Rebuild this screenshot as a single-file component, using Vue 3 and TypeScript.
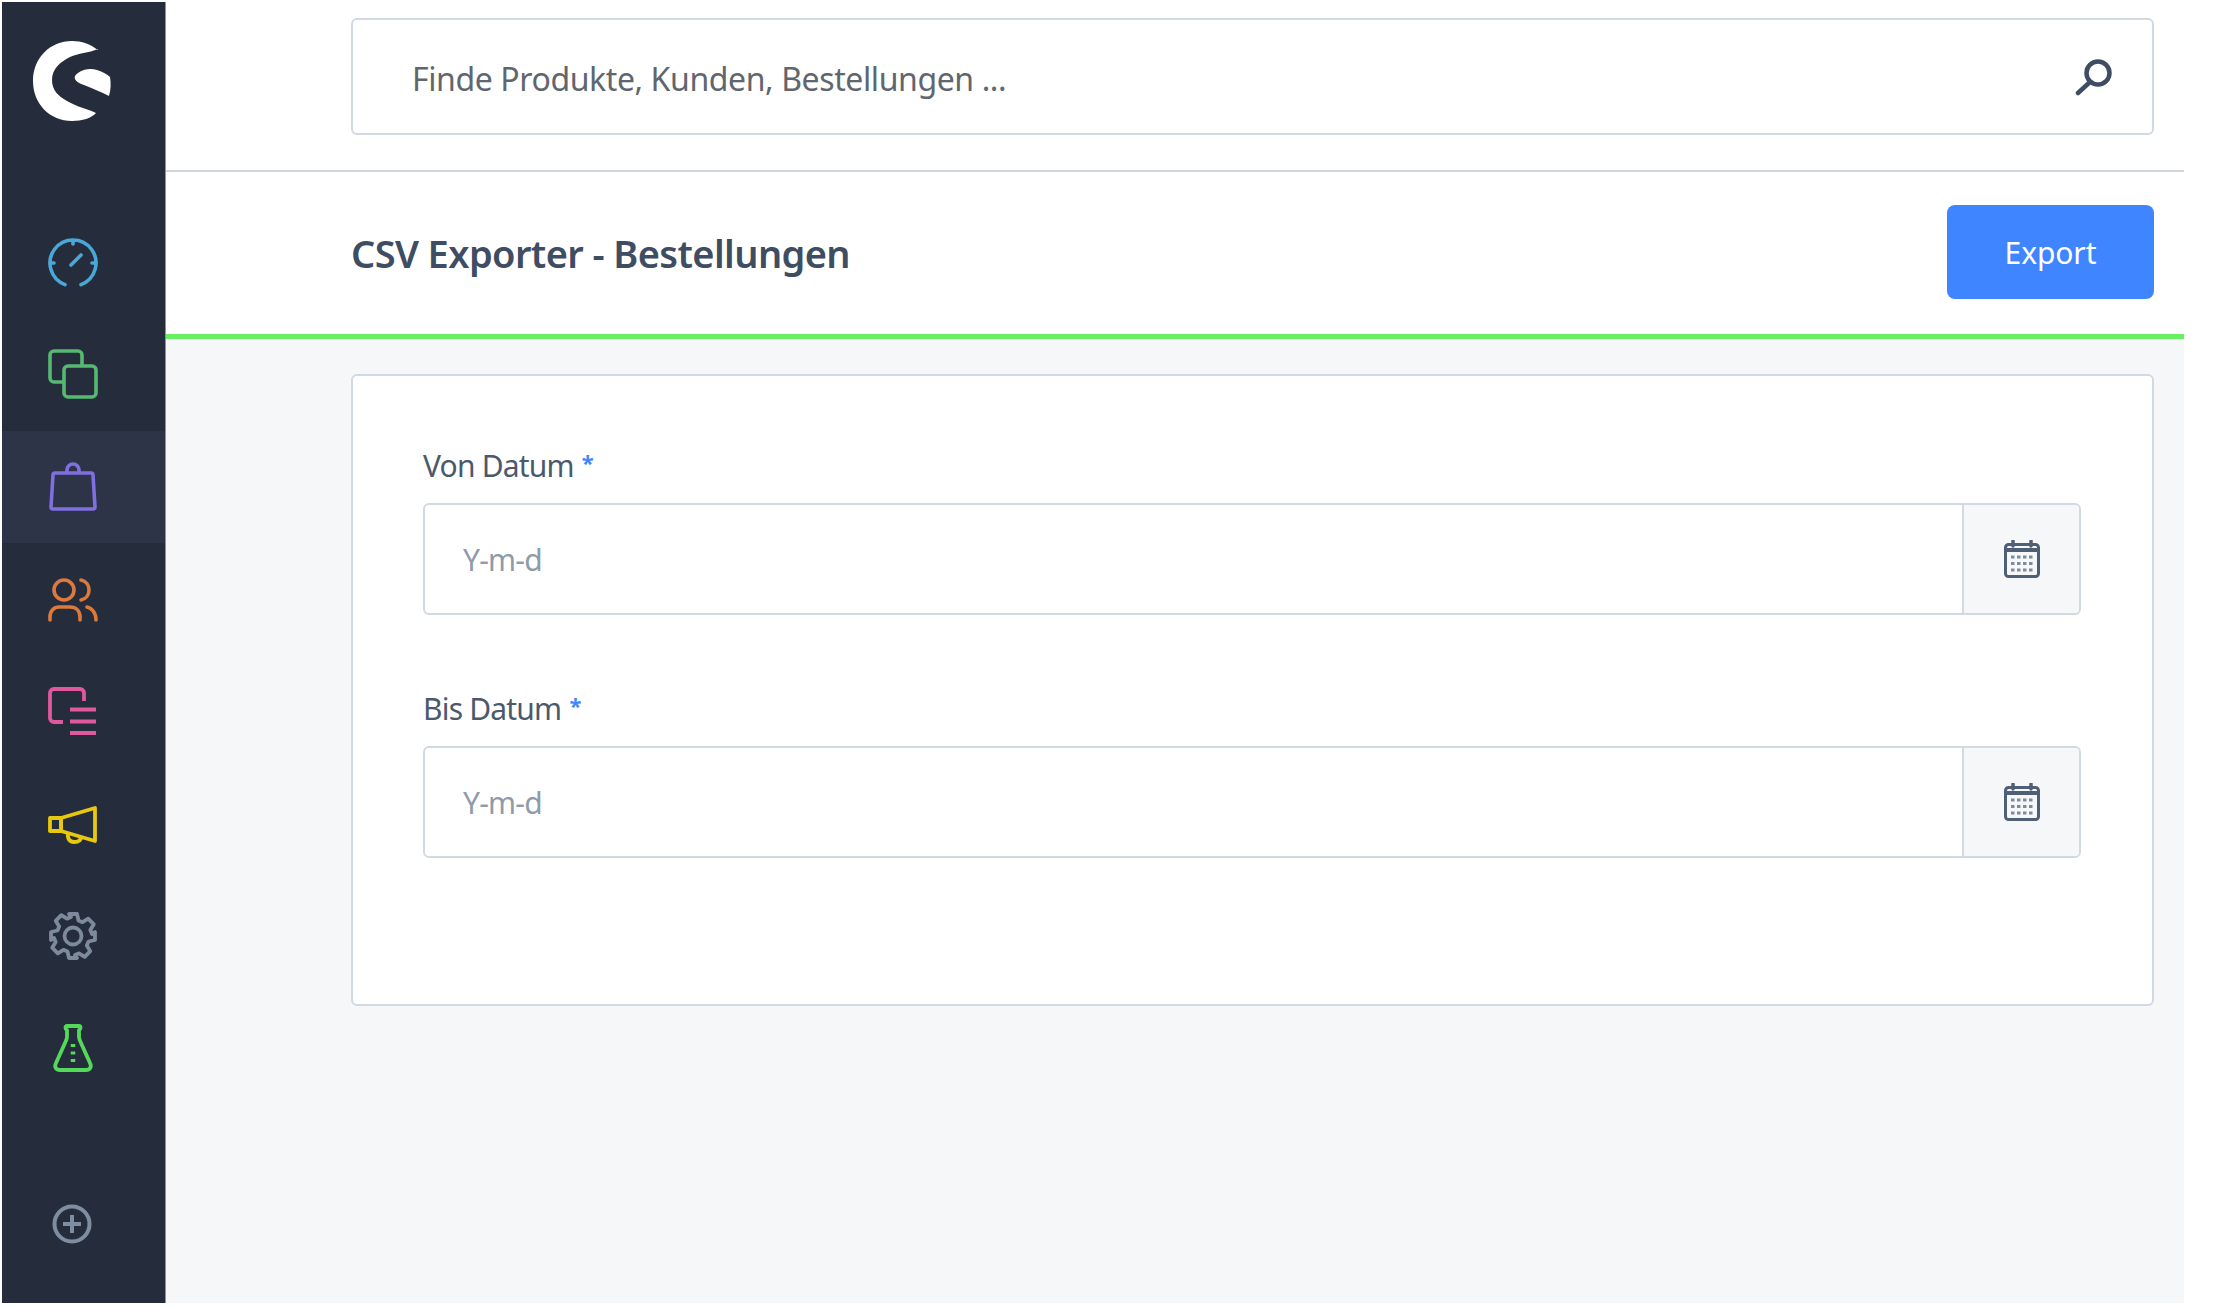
<script setup lang="ts">
const fields = [
  { id: 'from', label: 'Von Datum' },
  { id: 'to', label: 'Bis Datum' },
]
</script>

<template>
  <div class="page">
    <aside class="nav">
      <div class="nav-logo">
        <svg width="82" height="82" viewBox="0 0 82 82">
          <path fill="#fff" d="M66 10C58 4 50 1 40 1 18 1 1 18 1 41s17 40 39 40c10 0 20-3 24-8-8-4-19-6-29-12-9-5-15-11-15-21 0-11 8-18 18-23 8-4 19-4 28-8z" />
          <path fill="#fff" d="M46 33c5-4 13-5 19-3 6 2 10 4 13 7 1 6 1 12-1 19-8-4-17-8-25-11-6-2-8-4-9-6-1-2 0-4 3-6z" />
        </svg>
      </div>
      <div class="nav-items">
        <div class="nav-item">
          <svg width="50" height="50" viewBox="0 0 50 50" fill="none" stroke="#4aa8d8" stroke-width="3.6" stroke-linecap="round">
            <path d="M17 47.600A23 23 0 1 1 33 47.600" />
            <path d="M25 4v3M3 26h3M44 26h3M23 28l10-10" />
          </svg>
        </div>
        <div class="nav-item">
          <svg width="50" height="50" viewBox="0 0 50 50" fill="none" stroke="#57b872" stroke-width="3.6" stroke-linejoin="round">
            <path d="M16 33H6a4 4 0 0 1-4-4V6a4 4 0 0 1 4-4h24a4 4 0 0 1 4 4v11" />
            <rect x="16" y="17" width="32" height="31" rx="4" />
          </svg>
        </div>
        <div class="nav-item nav-item--active">
          <svg width="50" height="50" viewBox="0 0 50 50" fill="none" stroke="#7f6fe0" stroke-width="3.6" stroke-linejoin="round">
            <path d="M7 11h36a2 2 0 0 1 2 2l2 32a2 2 0 0 1-2 2H5a2 2 0 0 1-2-2l2-32a2 2 0 0 1 2-2z" />
            <path d="M19 11V8a6 6 0 0 1 12 0v3" />
          </svg>
        </div>
        <div class="nav-item">
          <svg width="50" height="50" viewBox="0 0 50 50" fill="none" stroke="#dc7a3e" stroke-width="3.6" stroke-linecap="round">
            <circle cx="16" cy="16" r="10" />
            <path d="M2 46v-3c0-6 4-10 9-10h11c6 0 10 4 10 10v3" />
            <path d="M33 6c5 1 8 5 8 10s-3 9-8 10M39 33c5 1 9 6 9 13" />
          </svg>
        </div>
        <div class="nav-item">
          <svg width="50" height="50" viewBox="0 0 50 50" fill="none" stroke="#e0599f" stroke-width="3.800" stroke-linejoin="round">
            <path d="M15 36H6a4 4 0 0 1-4-4V7a4 4 0 0 1 4-4h26a4 4 0 0 1 4 4v8" />
            <path d="M22 23.500h26M22 35.500h26M22 47h26" />
          </svg>
        </div>
        <div class="nav-item">
          <svg width="50" height="50" viewBox="0 0 50 50" fill="none" stroke="#e8c80e" stroke-width="3.800" stroke-linejoin="round">
            <path d="M13 19H2v13h11z" />
            <path d="M13 19L47 9v33L13 32z" />
            <path d="M20 34c-1 6 2 9 6 9 4 0 7-1 7-5" />
          </svg>
        </div>
        <div class="nav-item">
          <svg width="50" height="50" viewBox="0 0 50 50" fill="none" stroke="#7d8a9c" stroke-width="3.800" stroke-linejoin="round">
            <circle cx="25" cy="25" r="8.500" />
            <path d="M21 3h8l1.500 6.500 4 1.700 5.700-3.500 5.600 5.600-3.500 5.700 1.700 4L47 21v8l-6.500 1.500-1.700 4 3.500 5.700-5.600 5.600-5.700-3.500-4 1.700L29 47h-8l-1.500-6.500-4-1.700-5.700 3.500-5.600-5.600 3.500-5.700-1.700-4L3 29v-8l6.500-1.500 1.700-4-3.500-5.700 5.600-5.600 5.700 3.500 4-1.700z" />
          </svg>
        </div>
        <div class="nav-item">
          <svg width="50" height="50" viewBox="0 0 50 50" fill="none" stroke="#55d95a" stroke-width="3.800" stroke-linejoin="round" stroke-linecap="round">
            <path d="M19 3h12c2 0 2 3 0 4v7c0 2 1 4 2 6l9 20c2 4 0 7-4 7H12c-4 0-6-3-4-7l9-20c1-2 2-4 2-6V7c-2-1-2-4 0-4z" />
            <path d="M25 21v3M25 28.500v3M25 36v3" stroke-linecap="butt" stroke-width="4.500" />
          </svg>
        </div>
      </div>
      <div class="nav-add">
        <svg width="40" height="40" viewBox="0 0 40 40" fill="none" stroke="#7f8da0" stroke-width="4">
          <circle cx="20" cy="20" r="17.500" />
          <path d="M20 11v18M11 20h18" />
        </svg>
      </div>
    </aside>

    <main class="main">
      <div class="search-bar">
        <div class="search-box">
          <span class="search-text">Finde Produkte, Kunden, Bestellungen ...</span>
          <svg width="38" height="38" viewBox="0 0 38 38" fill="none" stroke="#3f4d62" stroke-width="4.500">
            <circle cx="23" cy="15" r="11.500" />
            <path d="M15 24L3 35" stroke-linecap="round" />
          </svg>
        </div>
      </div>

      <div class="smart-bar">
        <h1 class="title">CSV Exporter - Bestellungen</h1>
        <button class="export-btn" type="button">Export</button>
      </div>

      <div class="content">
        <section class="card">
          <div v-for="f in fields" :key="f.id" class="field">
            <label class="field-label">{{ f.label }}<span class="req">*</span></label>
            <div class="date-input">
              <div class="date-value">Y-m-d</div>
              <div class="date-addon">
                <svg width="36" height="38" viewBox="0 0 36 38" fill="none">
                  <rect x="1.500" y="4.500" width="33" height="32" rx="3" stroke="#4f5f75" stroke-width="3" />
                  <path d="M1.500 10h33" stroke="#4f5f75" stroke-width="4" />
                  <path d="M9 1v5M27 1v5" stroke="#4f5f75" stroke-width="3.500" stroke-linecap="round" />
                  <path d="M7 17h22M7 23.500h22M7 30h22" stroke="#7e8b9c" stroke-width="3.200" stroke-dasharray="3.500 2.500" />
                </svg>
              </div>
            </div>
          </div>
        </section>
      </div>
    </main>
  </div>
</template>

<style scoped>
.page {
  display: flex;
  width: 2182px;
  height: 1301px;
  margin: 2px 0 0 2px;
  font-family: "Noto Sans", "Open Sans", sans-serif;
  color: #3f4d62;
}
.nav {
  display: flex;
  flex-direction: column;
  flex-shrink: 0;
  width: 164px;
  box-sizing: border-box;
  background: #252c3c;
  border-right: 1px solid #8d94a0;
}
.nav-logo {
  display: flex;
  align-items: flex-start;
  padding: 38px 0 0 30px;
  height: 204px;
  box-sizing: border-box;
}
.nav-items { display: flex; flex-direction: column; }
.nav-item {
  display: flex;
  align-items: center;
  padding-left: 46px;
  height: 112.300px;
}
.nav-item--active { background: #2d3447; }
.nav-add {
  display: flex;
  margin-top: auto;
  padding: 0 0 59px 50px;
}
.main {
  display: flex;
  flex-direction: column;
  flex: 1;
  min-width: 0;
  background: #f6f7f9;
}
.search-bar {
  box-sizing: border-box;
  height: 170px;
  padding: 16px 30px 0 185px;
  background: #fff;
  border-bottom: 2px solid #d1d6de;
}
.search-box {
  display: flex;
  align-items: center;
  justify-content: space-between;
  box-sizing: border-box;
  height: 117px;
  padding: 0 39px 0 59px;
  border: 2px solid #d1d9e2;
  border-radius: 6px;
}
.search-text {
  padding-top: 3px;
  font-size: 32px;
  letter-spacing: -0.4px;
  color: #60666e;
}
.smart-bar {
  display: flex;
  align-items: center;
  justify-content: space-between;
  box-sizing: border-box;
  height: 167px;
  padding: 0 30px 2px 185px;
  background: #fff;
  border-bottom: 5px solid #69f060;
}
.title {
  margin: 2px 0 0;
  font-size: 38px;
  font-weight: 600;
  letter-spacing: -0.6px;
  color: #3f4d62;
}
.export-btn {
  width: 207px;
  height: 94px;
  border: 0;
  border-radius: 8px;
  background: #3f85ff;
  color: #fff;
  font-family: inherit;
  font-size: 30px;
  letter-spacing: -0.1px;
}
.content { padding: 35px 30px 0 185px; }
.card {
  box-sizing: border-box;
  height: 632px;
  padding: 64px 71px 0 70px;
  background: #fff;
  border: 2px solid #d1d9e2;
  border-radius: 6px;
}
.field { margin-bottom: 68px; }
.field-label {
  display: block;
  height: 63px;
  font-size: 30px;
  line-height: 52px;
  letter-spacing: -0.8px;
  color: #4b596c;
}
.req {
  position: relative;
  top: -6px;
  margin-left: 8px;
  font-size: 22px;
  font-weight: 700;
  color: #3f85ff;
}
.date-input {
  display: flex;
  height: 112px;
  box-sizing: border-box;
  border: 2px solid #d1d9e2;
  border-radius: 6px;
  overflow: hidden;
}
.date-value {
  display: flex;
  align-items: center;
  flex: 1;
  padding-left: 38px;
  font-size: 30px;
  letter-spacing: -0.8px;
  color: #8e9bab;
}
.date-addon {
  display: flex;
  align-items: center;
  justify-content: center;
  flex-shrink: 0;
  width: 115px;
  background: #f6f7f9;
  border-left: 2px solid #d1d9e2;
}
</style>

<style>
body { background: #fff; }
</style>
